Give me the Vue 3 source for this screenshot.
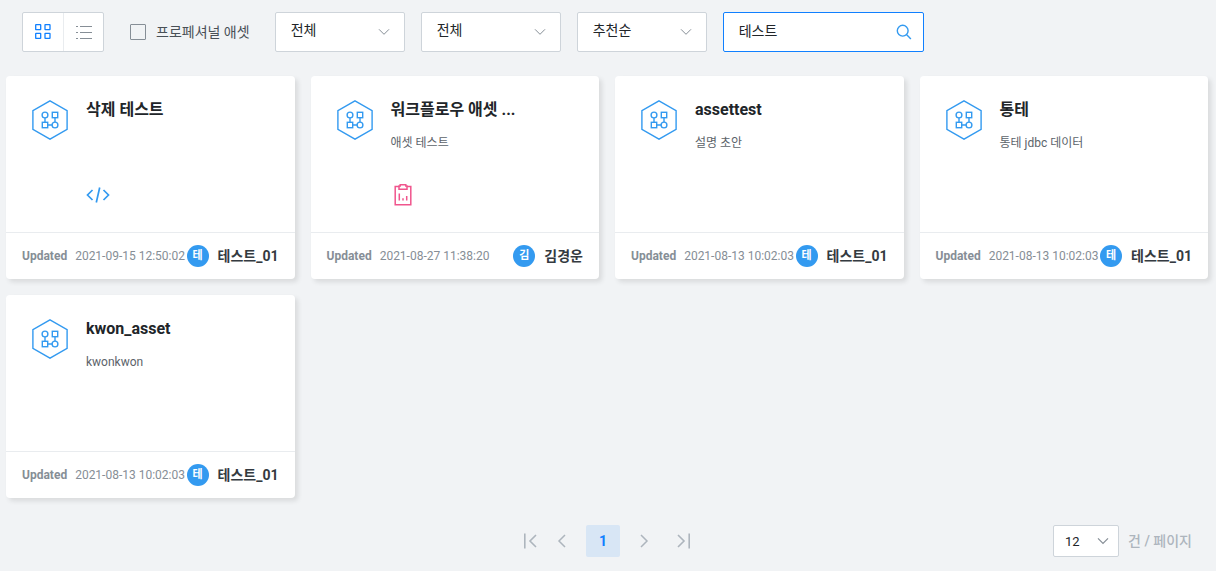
<script setup>
import { ref } from 'vue'

const view = ref('grid')
const professional = ref(false)
const keyword = ref('테스트')
const pageSize = ref('12')

const filters = [
  { id: 'category', label: '분류', value: '전체', size: 'medium' },
  { id: 'type', label: '유형', value: '전체', size: 'wide' },
  { id: 'sort', label: '정렬', value: '추천순', size: 'medium' },
]

const assets = [
  { id: 1, title: '삭제 테스트', desc: '', kind: 'code', date: '2021-09-15 12:50:02', badge: '테', user: '테스트_01' },
  { id: 2, title: '워크플로우 애셋 ...', desc: '애셋 테스트', kind: 'report', date: '2021-08-27 11:38:20', badge: '김', user: '김경운' },
  { id: 3, title: 'assettest', desc: '설명 초안', kind: '', date: '2021-08-13 10:02:03', badge: '테', user: '테스트_01' },
  { id: 4, title: '통테', desc: '통테 jdbc 데이터', kind: '', date: '2021-08-13 10:02:03', badge: '테', user: '테스트_01' },
  { id: 5, title: 'kwon_asset', desc: 'kwonkwon', kind: '', date: '2021-08-13 10:02:03', badge: '테', user: '테스트_01' },
]
</script>

<template>
  <main class="page">
    <form class="toolbar" @submit.prevent>
      <div class="toggle">
        <button type="button" class="toggle-btn" :class="{ active: view === 'grid' }" aria-label="카드 보기" @click="view = 'grid'">
          <svg width="16" height="16" viewBox="0 0 16 16" fill="none" stroke="currentColor" stroke-width="1.3">
            <rect x="0.7" y="0.7" width="5" height="5" rx=".4" /><rect x="10" y="0.7" width="5" height="5" rx=".4" />
            <rect x="0.7" y="9.3" width="5" height="5" rx=".4" /><rect x="10" y="9.3" width="5" height="5" rx=".4" />
          </svg>
        </button>
        <button type="button" class="toggle-btn" :class="{ active: view === 'list' }" aria-label="목록 보기" @click="view = 'list'">
          <svg width="16" height="16" viewBox="0 0 16 16" fill="none" stroke="currentColor">
            <path d="M4 2.5h12M4 8.5h12M4 14.5h12M0 2.5h2M0 8.5h2M0 14.5h2" />
          </svg>
        </button>
      </div>

      <label class="check">
        <input v-model="professional" type="checkbox" />
        <span>프로페셔널 애셋</span>
      </label>

      <div v-for="f in filters" :key="f.id" class="select" :class="f.size">
        <select :id="f.id" :aria-label="f.label">
          <option>{{ f.value }}</option>
        </select>
        <svg class="chevron" width="12" height="8" viewBox="0 0 12 8" fill="none" stroke="currentColor"><path d="M1 1.3l5 5 5-5" /></svg>
      </div>

      <div class="search">
        <input v-model="keyword" type="text" aria-label="검색어" />
        <button type="submit" aria-label="검색">
          <svg width="16" height="16" viewBox="0 0 16 16" fill="none" stroke="currentColor" stroke-width="1.4">
            <circle cx="6.7" cy="6.7" r="5.4" /><path d="M10.7 10.7l4.2 4.2" />
          </svg>
        </button>
      </div>
    </form>

    <section class="cards">
      <article v-for="a in assets" :key="a.id" class="card">
        <div class="body">
          <svg class="hex" width="36" height="40" viewBox="0 0 36 40" fill="none" stroke="currentColor" stroke-width="1.4">
            <path d="M18 .9L35.1 10.6v18.8L18 39.1.9 29.4V10.6z" />
            <circle cx="13" cy="15" r="2.9" /><rect x="20.3" y="12.3" width="5.4" height="5.4" />
            <rect x="10.3" y="22.3" width="5.4" height="5.4" /><circle cx="23" cy="25" r="2.9" />
            <path d="M13 18v4.3M23 17.7v4.4M15.7 25h4.4" />
          </svg>
          <div class="info">
            <h2>{{ a.title }}</h2>
            <p>{{ a.desc }}</p>
            <svg v-if="a.kind === 'code'" class="kind code" width="24" height="24" viewBox="0 0 24 24" fill="none" stroke="currentColor" stroke-width="1.7">
              <path d="M6.5 7L1.5 12l5 5M17.5 7l5 5-5 5M13.7 4.5l-3.4 15" />
            </svg>
            <svg v-if="a.kind === 'report'" class="kind report" width="24" height="24" viewBox="0 0 24 24" fill="none" stroke="currentColor" stroke-width="1.5">
              <path d="M8 3.6H4.2v18.100h15.6V3.600H16M9.200 1.800h5.600v1.300H16v3.200H8V3.100h1.200z" />
              <path d="M8.300 10.500v7M12 15.200v2.300M15.700 13v4.500" />
            </svg>
          </div>
        </div>
        <footer>
          <strong>Updated</strong>
          <time>{{ a.date }}</time>
          <span class="badge">{{ a.badge }}</span>
          <span class="user">{{ a.user }}</span>
        </footer>
      </article>
    </section>

    <div class="paging">
      <nav aria-label="페이지">
        <button type="button" class="nav first" aria-label="처음">
          <svg width="14" height="16" viewBox="0 0 14 16" fill="none" stroke="currentColor" stroke-width="1.6"><path d="M1.8 .5v15M13 2L7 8l6 6" /></svg>
        </button>
        <button type="button" class="nav" aria-label="이전">
          <svg width="14" height="16" viewBox="0 0 14 16" fill="none" stroke="currentColor" stroke-width="1.5"><path d="M10 2L4 8l6 6" /></svg>
        </button>
        <button type="button" class="current" aria-current="page">1</button>
        <button type="button" class="nav" aria-label="다음">
          <svg width="14" height="16" viewBox="0 0 14 16" fill="none" stroke="currentColor" stroke-width="1.5"><path d="M4 2l6 6-6 6" /></svg>
        </button>
        <button type="button" class="nav last" aria-label="마지막">
          <svg width="14" height="16" viewBox="0 0 14 16" fill="none" stroke="currentColor" stroke-width="1.6"><path d="M12.200 .5v15M1 2l6 6-6 6" /></svg>
        </button>
      </nav>
      <div class="size">
        <div class="select small">
          <select id="page-size" v-model="pageSize">
            <option>12</option>
          </select>
          <svg class="chevron" width="12" height="8" viewBox="0 0 12 8" fill="none" stroke="currentColor" stroke-width="1.2"><path d="M1 1.300l5 5 5-5" /></svg>
        </div>
        <label for="page-size">건 / 페이지</label>
      </div>
    </div>
  </main>
</template>

<style>
html,
body {
  background: #f1f3f5;
}
</style>

<style scoped>
* {
  box-sizing: border-box;
}
.page {
  padding: 12px 8px 14px 6px;
  font-family: Roboto, "Noto Sans CJK KR", sans-serif;
  font-size: 14px;
  color: #212529;
}
button,
input,
select {
  font: inherit;
  color: inherit;
  margin: 0;
}
button {
  display: flex;
  align-items: center;
  justify-content: center;
  padding: 0;
  border: 0;
  background: none;
  cursor: pointer;
}
.toolbar {
  display: flex;
  align-items: center;
  gap: 16px;
  padding-left: 16px;
}
.toggle {
  display: flex;
  height: 40px;
  background: #fff;
  border: 1px solid #ced4da;
  border-radius: 2px;
}
.toggle-btn {
  width: 40px;
  color: #868e96;
}
.toggle-btn + .toggle-btn {
  border-left: 1px solid #e9ecef;
}
.toggle-btn.active {
  color: #1080ff;
}
.check {
  display: flex;
  align-items: center;
  gap: 10px;
  margin: 0 9px 0 10px;
  color: #495057;
  line-height: 20px;
}
.check input {
  appearance: none;
  width: 16px;
  height: 16px;
  border: 1px solid #868e96;
  border-radius: 1px;
}
.check input:checked {
  background: #1080ff;
}
.select {
  display: flex;
  align-items: center;
  position: relative;
}
.select select {
  appearance: none;
  width: 100%;
  height: 40px;
  padding: 0 32px 4px 15px;
  background: #fff;
  border: 1px solid #ced4da;
  border-radius: 2px;
  outline: none;
}
.select.medium {
  width: 130px;
}
.select.wide {
  width: 140px;
}
.chevron {
  position: absolute;
  right: 15px;
  color: #868e96;
  pointer-events: none;
}
.search {
  display: flex;
  align-items: center;
  width: 201px;
  height: 40px;
  background: #fff;
  border: 1px solid #1080ff;
  border-radius: 2px;
}
.search input {
  flex: 1;
  min-width: 0;
  padding: 0 0 4px 15px;
  border: 0;
  background: none;
  outline: none;
}
.search button {
  width: 38px;
  height: 38px;
  color: #339af0;
}
.cards {
  display: grid;
  grid-template-columns: repeat(4, 1fr);
  gap: 16px;
  margin-top: 24px;
}
.card {
  background: #fff;
  border-radius: 4px;
  box-shadow: 3px 3px 5px rgba(0, 0, 0, 0.1);
}
.body {
  display: flex;
  gap: 18px;
  height: 156px;
  padding: 24px 16px 0 26px;
}
.hex {
  flex: none;
  color: #339af0;
}
.info {
  flex: 1;
  min-width: 0;
}
h2 {
  margin: 0;
  font-size: 16px;
  font-weight: 700;
  line-height: 20px;
}
p {
  height: 20px;
  margin: 13px 0 30px;
  font-size: 12px;
  line-height: 20px;
  color: #5c636a;
}
.kind {
  display: block;
}
.code {
  color: #339af0;
}
.report {
  color: #f0558d;
}
footer {
  display: flex;
  align-items: center;
  height: 47px;
  padding: 0 16px;
  border-top: 1px solid #e9ecef;
  font-size: 12px;
  color: #868e96;
  white-space: nowrap;
}
footer strong {
  font-weight: 700;
}
time {
  margin: 0 auto 0 8px;
}
.badge {
  flex: none;
  width: 22px;
  height: 22px;
  margin-right: 9px;
  border-radius: 50%;
  background: #339af0;
  color: #fff;
  font-size: 11px;
  font-weight: 700;
  line-height: 22px;
  text-align: center;
}
.user {
  font-size: 14px;
  font-weight: 700;
  line-height: 18px;
  color: #343a40;
}
.paging {
  display: grid;
  grid-template-columns: 1fr auto 1fr;
  align-items: center;
  margin-top: 27px;
}
nav {
  grid-column: 2;
  display: flex;
  align-items: center;
  gap: 12px;
}
.nav {
  width: 24px;
  height: 32px;
  color: #adb5bd;
}
.first {
  margin-right: -4px;
}
.last {
  margin-left: 4px;
}
.current {
  width: 34px;
  height: 32px;
  border-radius: 2px;
  background: #d8e6f5;
  color: #1080ff;
  font-weight: 700;
}
.size {
  display: flex;
  justify-content: flex-end;
  align-items: center;
  gap: 9px;
  padding-right: 16px;
}
.size label {
  color: #adb5bd;
  font-weight: 500;
  line-height: 20px;
}
.small {
  width: 66px;
}
.small select {
  height: 32px;
  padding: 0 24px 0 11px;
  font-size: 13px;
}
.small .chevron {
  right: 10px;
}
</style>
